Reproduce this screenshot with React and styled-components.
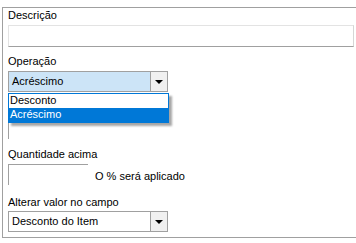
import React from "react";
import styled, { createGlobalStyle } from "styled-components";

const Global = createGlobalStyle`
  html, body { margin: 0; padding: 0; background: #fff; overflow: hidden; }
  body { font-family: "Liberation Sans", Arial, sans-serif; font-size: 11px; color: #000; }
`;

const Frame = styled.div`
  box-sizing: border-box;
  margin: 7px 0 0 2px;
  width: 354px;
  height: 231px;
  border: 1px solid #a0a0a0;
  border-right: none;
  padding: 0 0 0 5px;
  display: flex;
  flex-direction: column;
`;

const Label = styled.div`
  line-height: 13px;
  height: 13px;
  margin-top: ${(p) => p.$top}px;
  white-space: nowrap;
`;

const TextInput = styled.div`
  box-sizing: border-box;
  margin-top: 3px;
  width: 346px;
  height: 22px;
  border: 1px solid #e3e3e3;
  border-bottom-color: #a0a0a0;
  border-right-color: #d6d6d6;
  background: #fff;
`;

const SelectWrap = styled.div`
  position: relative;
  margin-top: ${(p) => p.$top}px;
  width: 160px;
  height: 21px;
`;

const SelectBox = styled.div`
  box-sizing: border-box;
  width: 100%;
  height: 100%;
  border: 1px solid #a0a0a0;
  background: ${(p) => (p.$focused ? "#cce4f7" : "#fff")};
  display: flex;
  align-items: center;
`;

const SelectText = styled.span`
  flex: 1;
  padding-left: 3px;
  line-height: 13px;
  white-space: nowrap;
`;

const ArrowButton = styled.div`
  box-sizing: border-box;
  width: 17px;
  height: 100%;
  border-left: 1px solid #a0a0a0;
  background: #f0f0f0;
  display: flex;
  align-items: center;
  justify-content: center;
`;

const Triangle = styled.div`
  width: 0;
  height: 0;
  border-left: 4px solid transparent;
  border-right: 4px solid transparent;
  border-top: 4px solid #000;
  margin-top: 1px;
`;

const DropList = styled.div`
  position: absolute;
  z-index: 2;
  left: 0;
  top: 22px;
  box-sizing: border-box;
  width: 161px;
  border: 1px solid #0078d7;
  background: #fff;
  box-shadow: 3px 3px 2px rgba(0, 0, 0, 0.35);
`;

const ListItem = styled.div`
  height: 14px;
  line-height: 13px;
  padding-left: 1px;
  background: ${(p) => (p.$selected ? "#0078d7" : "#fff")};
  color: ${(p) => (p.$selected ? "#fff" : "#000")};
  white-space: nowrap;
`;

const HiddenField = styled.div`
  box-sizing: border-box;
  margin-top: 3px;
  width: 80px;
  height: 44px;
  border-top: 1px solid #a0a0a0;
  border-left: 1px solid #a0a0a0;
`;

const Row = styled.div`
  display: flex;
  align-items: center;
  margin-top: 3px;
  height: 21px;
`;

const PlainInput = styled.div`
  box-sizing: border-box;
  width: 80px;
  height: 21px;
  border-top: 1px solid #a0a0a0;
  border-left: 1px solid #a0a0a0;
  background: #fff;
`;

const Hint = styled.span`
  margin-left: 7px;
  margin-top: 4px;
  line-height: 13px;
  white-space: nowrap;
`;

export default function App() {
  return (
    <>
      <Global />
      <Frame>
        <Label $top={1}>Descrição</Label>
        <TextInput />
        <Label $top={8}>Operação</Label>
        <SelectWrap $top={3}>
          <SelectBox $focused>
            <SelectText>Acréscimo</SelectText>
            <ArrowButton>
              <Triangle />
            </ArrowButton>
          </SelectBox>
          <DropList>
            <ListItem>Desconto</ListItem>
            <ListItem $selected>Acréscimo</ListItem>
          </DropList>
        </SelectWrap>
        <HiddenField />
        <Label $top={9}>Quantidade acima</Label>
        <Row>
          <PlainInput />
          <Hint>O % será aplicado</Hint>
        </Row>
        <Label $top={11}>Alterar valor no campo</Label>
        <SelectWrap $top={2}>
          <SelectBox>
            <SelectText>Desconto do Item</SelectText>
            <ArrowButton>
              <Triangle />
            </ArrowButton>
          </SelectBox>
        </SelectWrap>
      </Frame>
    </>
  );
}
